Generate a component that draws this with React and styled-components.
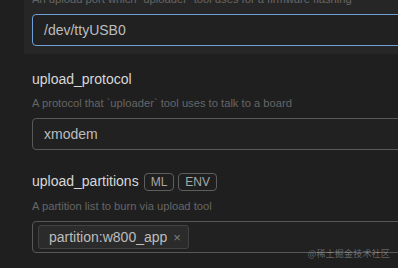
import React from 'react';
import styled, { createGlobalStyle, css } from 'styled-components';

const GlobalStyle = createGlobalStyle`
    html, body {
        margin: 0;
        padding: 0;
        background: #1f1f1f;
        overflow: hidden;
    }
    body {
        font-family: "Liberation Sans", Arial, sans-serif;
    }
`;

const Page = styled.div`
    position: relative;
    width: 398px;
    height: 268px;
    overflow: hidden;
`;

const List = styled.div`
    display: flex;
    flex-direction: column;
    width: 640px;
    margin: -50px 0 0 24px;
`;

const Section = styled.div`
    display: flex;
    flex-direction: column;
    padding: 15px 8px 6px;
    background: transparent;

    ${props => props.active && css`
        background: #262626;
        padding-bottom: 8px;
    `}
`;

const Header = styled.div`
    display: flex;
    align-items: center;
    gap: 4px;
    height: 20px;
    margin-bottom: ${props => (props.tall ? '1px' : '0')};
`;

const Name = styled.div`
    font-size: 14px;
    line-height: 20px;
    color: #d8d8d8;
    margin-right: 1px;
`;

const Badge = styled.span`
    display: inline-flex;
    align-items: center;
    height: 16px;
    margin-top: 2px;
    padding: 0 6px;
    border: 1px solid #5e5e5e;
    border-radius: 4px;
    font-size: 12px;
    color: #a8a8a8;
`;

const Description = styled.div`
    margin-top: 6px;
    font-size: 11.2px;
    line-height: 16px;
    color: #666666;
    white-space: nowrap;
`;

const Field = styled.div`
    display: flex;
    align-items: center;
    box-sizing: border-box;
    height: 32px;
    margin-top: 7px;
    padding: 0 11px;
    background: #212121;
    border: 1px solid ${props => (props.focused ? '#6f9fd6' : '#585858')};
    border-radius: 4px;
    font-size: 14px;
    color: #bdbdbd;

    ${props => props.tags && css`
        padding: 0 5px;
    `}
`;

const Chip = styled.span`
    display: inline-flex;
    align-items: center;
    gap: 6px;
    box-sizing: border-box;
    height: 24px;
    padding: 0 7px 0 10px;
    background: #2b2b2b;
    border: 1px solid #424242;
    border-radius: 3px;
    color: #bdbdbd;
`;

const Remove = styled.span`
    font-size: 13px;
    color: #7e7e7e;
`;

const Watermark = styled.div`
    position: absolute;
    right: 8px;
    bottom: 8px;
    font-family: "Noto Sans CJK SC", sans-serif;
    font-size: 9px;
    line-height: 12px;
    letter-spacing: 0.2px;
    color: rgba(255, 255, 255, 0.32);
`;

const settings = [
    {
        name: 'upload_port',
        description: 'An upload port which `uploader` tool uses for a firmware flashing',
        value: '/dev/ttyUSB0',
        active: true,
    },
    {
        name: 'upload_protocol',
        description: 'A protocol that `uploader` tool uses to talk to a board',
        value: 'xmodem',
    },
    {
        name: 'upload_partitions',
        description: 'A partition list to burn via upload tool',
        badges: ['ML', 'ENV'],
        tags: ['partition:w800_app'],
    },
];

const Setting = ({ item }) => (
    <Section active={item.active}>
        <Header tall={!!item.badges}>
            <Name>{item.name}</Name>
            {item.badges && item.badges.map(b => <Badge key={b}>{b}</Badge>)}
        </Header>
        <Description>{item.description}</Description>
        {item.tags ? (
            <Field tags>
                {item.tags.map(t => (
                    <Chip key={t}>
                        {t}
                        <Remove>×</Remove>
                    </Chip>
                ))}
            </Field>
        ) : (
            <Field focused={item.active}>{item.value}</Field>
        )}
    </Section>
);

const App = () => (
    <Page>
        <GlobalStyle />
        <List>
            {settings.map(s => <Setting key={s.name} item={s} />)}
        </List>
        <Watermark>@稀土掘金技术社区</Watermark>
    </Page>
);

export default App;
